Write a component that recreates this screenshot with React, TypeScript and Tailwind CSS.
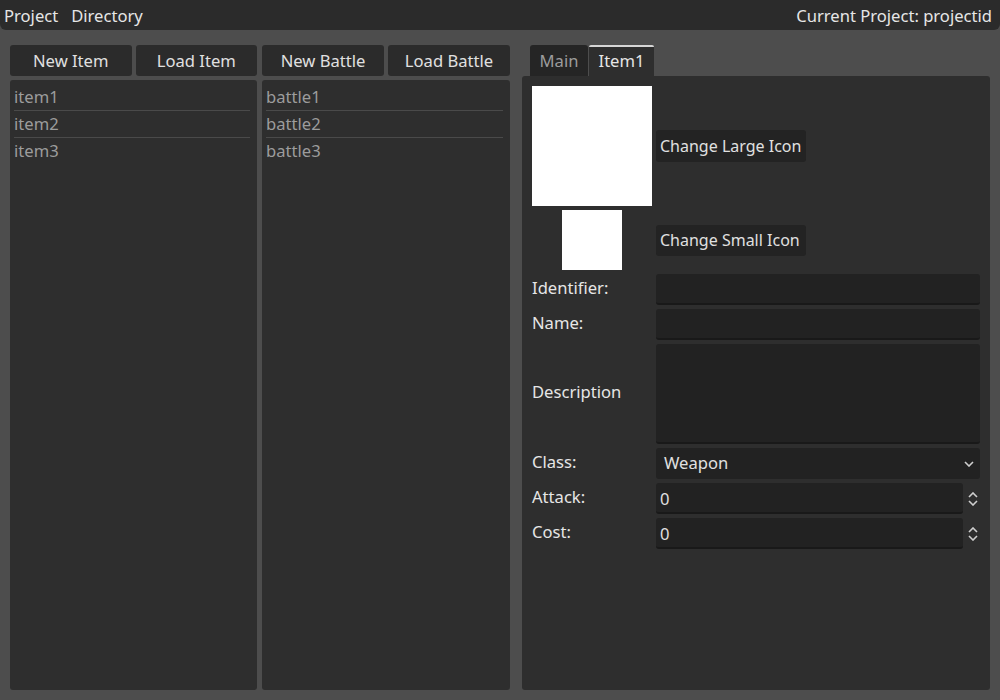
// Item / battle editor window, dark editor theme

const items = ['item1', 'item2', 'item3'];
const battles = ['battle1', 'battle2', 'battle3'];

function ToolButton({ label }: { label: string }) {
  return (
    <button className="h-[31px] flex-1 rounded-[3px] bg-[#2b2b2b] pt-[2px] text-[#e0e0e0]">
      {label}
    </button>
  );
}

function ListPanel({ rows }: { rows: string[] }) {
  return (
    <div className="flex-1 rounded-[3px] bg-[#2e2e2e] pl-1 pr-[7px] pt-1">
      {rows.map((r, i) => (
        <div
          key={r}
          className={`flex h-[27px] items-center text-[#9c9c9c] ${
            i < rows.length - 1 ? 'border-b border-[#4a4a4a]' : ''
          }`}
        >
          {r}
        </div>
      ))}
    </div>
  );
}

function Field({ tall }: { tall?: boolean }) {
  return (
    <div
      className={`${tall ? 'h-[100px]' : 'h-[31px]'} rounded-[3px] border-b-2 border-[#191919] bg-[#222222]`}
    />
  );
}

function Chevron({ up }: { up?: boolean }) {
  return (
    <svg width="10" height="6" viewBox="0 0 10 6" className="block">
      <path
        d={up ? 'M1 5 L5 1 L9 5' : 'M1 1 L5 5 L9 1'}
        fill="none"
        stroke="#cfcfcf"
        strokeWidth="1.6"
      />
    </svg>
  );
}

function SpinField({ value }: { value: string }) {
  return (
    <div className="flex h-[31px] items-center">
      <div className="flex h-full flex-1 items-center rounded-[3px] border-b-2 border-[#191919] bg-[#222222] pl-1 pt-[4px] text-[#e0e0e0]">
        {value}
      </div>
      <div className="flex w-[17px] flex-col items-center justify-center gap-[2px] pl-[3px]">
        <Chevron up />
        <Chevron />
      </div>
    </div>
  );
}

function Label({ text }: { text: string }) {
  return <div className="flex items-center pb-[3px]">{text}</div>;
}

export default function App() {
  return (
    <div
      className="flex h-[700px] w-[1000px] flex-col bg-[#4d4d4d] text-[16.6px]"
      style={{ fontFamily: '"Noto Sans", "Open Sans", sans-serif' }}
    >
      {/* Menu bar */}
      <div className="flex h-[30px] items-center justify-between rounded-b-[6px] bg-[#2b2b2b] px-1 pt-[2px] text-[#e6e6e6]">
        <div className="flex gap-[13px]">
          <span>Project</span>
          <span>Directory</span>
        </div>
        <span className="pr-1">Current Project: projectid</span>
      </div>

      <div className="flex flex-1 gap-[12px] px-[10px] pb-[10px] pt-[15px]">
        {/* Items and battles */}
        <div className="flex w-[500px] gap-[5px]">
          <div className="flex w-[247px] flex-col gap-1">
            <div className="flex gap-1">
              <ToolButton label="New Item" />
              <ToolButton label="Load Item" />
            </div>
            <ListPanel rows={items} />
          </div>
          <div className="flex flex-1 flex-col gap-1">
            <div className="flex gap-1">
              <ToolButton label="New Battle" />
              <ToolButton label="Load Battle" />
            </div>
            <ListPanel rows={battles} />
          </div>
        </div>

        {/* Editor */}
        <div className="flex flex-1 flex-col">
          <div className="flex h-[31px] pl-2">
            <div className="flex w-[58px] items-center justify-center rounded-t-[3px] bg-[#252525] pt-[2px] text-[#9c9c9c]">
              Main
            </div>
            <div className="ml-px flex w-[65px] items-center justify-center rounded-t-[2px] border-t-2 border-[#d6d6d6] bg-[#2e2e2e] text-[#e6e6e6]">
              Item1
            </div>
          </div>
          <div className="flex-1 rounded-[3px] bg-[#2e2e2e] p-[10px] text-[#e6e6e6]">
            <div className="grid grid-cols-[120px_1fr] gap-x-1 gap-y-1">
              <div className="h-[120px] w-[120px] bg-white" />
              <div className="flex items-center">
                <button className="h-[32px] w-[150px] whitespace-nowrap rounded-[3px] bg-[#232323] px-1 text-left text-[16px] text-[#e0e0e0]">
                  Change Large Icon
                </button>
              </div>
              <div className="flex h-[60px] justify-center">
                <div className="h-[60px] w-[60px] bg-white" />
              </div>
              <div className="flex items-center">
                <button className="h-[31px] w-[150px] whitespace-nowrap rounded-[3px] bg-[#232323] px-1 text-left text-[16px] text-[#e0e0e0]">
                  Change Small Icon
                </button>
              </div>

              <Label text="Identifier:" />
              <Field />
              <Label text="Name:" />
              <Field />
              <Label text="Description" />
              <Field tall />
              <Label text="Class:" />
              <div className="flex h-[31px] items-center justify-between rounded-[3px] bg-[#222222] pl-[8px] pr-[6px] text-[#e0e0e0]">
                <span>Weapon</span>
                <Chevron />
              </div>
              <Label text="Attack:" />
              <SpinField value="0" />
              <Label text="Cost:" />
              <SpinField value="0" />
            </div>
          </div>
        </div>
      </div>
    </div>
  );
}
